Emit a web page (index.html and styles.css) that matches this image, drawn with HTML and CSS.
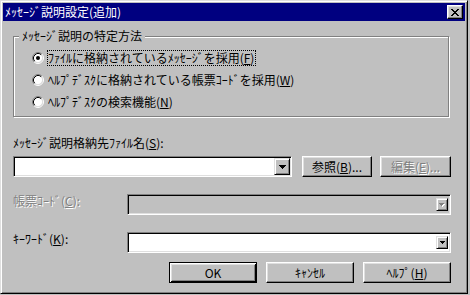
FILE: index.html
```html
<!DOCTYPE html>
<html lang="ja">
<head>
<meta charset="utf-8">
<title>ﾒｯｾｰｼﾞ説明設定(追加)</title>
<link rel="stylesheet" href="styles.css">
</head>
<body>
<div class="window">
  <div class="titlebar">
    <span class="title">ﾒｯｾｰｼﾞ説明設定(追加)</span>
    <span class="close">
      <svg class="close-x" width="8" height="7" viewBox="0 0 8 7"><path d="M0 0h2v1h-2zM6 0h2v1h-2zM1 1h2v1h-2zM5 1h2v1h-2zM2 2h4v1h-4zM3 3h2v1h-2zM2 4h4v1h-4zM1 5h2v1h-2zM5 5h2v1h-2zM0 6h2v1h-2zM6 6h2v1h-2z" fill="#000"/></svg>
    </span>
  </div>
  <div class="content">
    <div class="group">
      <div class="legend">ﾒｯｾｰｼﾞ説明の特定方法</div>
      <div class="radios">
        <div class="radio-row">
          <svg class="radio" width="12" height="12" viewBox="0 0 12 12"><circle cx="6" cy="6" r="4.5" fill="#fff"/><path d="M2.11 9.89A5.5 5.5 0 0 1 9.89 2.11" fill="none" stroke="#808080"/><path d="M9.89 2.11A5.5 5.5 0 0 1 2.11 9.89" fill="none" stroke="#fff"/><path d="M2.82 9.18A4.5 4.5 0 0 1 9.18 2.82" fill="none" stroke="#000"/><path d="M9.18 2.82A4.5 4.5 0 0 1 2.82 9.18" fill="none" stroke="#dfdfdf"/><circle cx="6" cy="6" r="2" fill="#000"/></svg>
          <span class="rlabel focus">ﾌｧｲﾙに格納されているﾒｯｾｰｼﾞを採用(<u>F</u>)</span>
        </div>
        <div class="radio-row">
          <svg class="radio" width="12" height="12" viewBox="0 0 12 12"><circle cx="6" cy="6" r="4.5" fill="#fff"/><path d="M2.11 9.89A5.5 5.5 0 0 1 9.89 2.11" fill="none" stroke="#808080"/><path d="M9.89 2.11A5.5 5.5 0 0 1 2.11 9.89" fill="none" stroke="#fff"/><path d="M2.82 9.18A4.5 4.5 0 0 1 9.18 2.82" fill="none" stroke="#000"/><path d="M9.18 2.82A4.5 4.5 0 0 1 2.82 9.18" fill="none" stroke="#dfdfdf"/></svg>
          <span class="rlabel">ﾍﾙﾌﾟﾃﾞｽｸに格納されている帳票ｺｰﾄﾞを採用(<u>W</u>)</span>
        </div>
        <div class="radio-row">
          <svg class="radio" width="12" height="12" viewBox="0 0 12 12"><circle cx="6" cy="6" r="4.5" fill="#fff"/><path d="M2.11 9.89A5.5 5.5 0 0 1 9.89 2.11" fill="none" stroke="#808080"/><path d="M9.89 2.11A5.5 5.5 0 0 1 2.11 9.89" fill="none" stroke="#fff"/><path d="M2.82 9.18A4.5 4.5 0 0 1 9.18 2.82" fill="none" stroke="#000"/><path d="M9.18 2.82A4.5 4.5 0 0 1 2.82 9.18" fill="none" stroke="#dfdfdf"/></svg>
          <span class="rlabel">ﾍﾙﾌﾟﾃﾞｽｸの検索機能(<u>N</u>)</span>
        </div>
      </div>
    </div>

    <div class="field-label">ﾒｯｾｰｼﾞ説明格納先ﾌｧｲﾙ名(<u>S</u>):</div>
    <div class="file-row">
      <div class="combo combo-file">
        <span class="ddbtn">
          <svg width="7" height="4" viewBox="0 0 7 4"><path d="M0 0h7v1h-1v1h-1v1h-1v1h-1v-1h-1v-1h-1v-1h-1z" fill="#000"/></svg>
        </span>
      </div>
      <button class="btn btn-browse">参照(<u>B</u>)...</button>
      <button class="btn btn-edit is-disabled">編集(<u>E</u>)...</button>
    </div>

    <div class="form-row">
      <div class="row-label is-disabled">帳票ｺｰﾄﾞ(<u>C</u>):</div>
      <div class="combo combo-wide combo-disabled">
        <span class="ddbtn ddbtn-small">
          <svg width="6" height="4" viewBox="0 0 6 4"><path d="M1 1h5v1h-1v1h-1v1h-1v-1h-1v-1h-1z" fill="#fff"/><path d="M0 0h5v1h-1v1h-1v1h-1v-1h-1v-1h-1z" fill="#808080"/></svg>
        </span>
      </div>
    </div>

    <div class="form-row">
      <div class="row-label">ｷｰﾜｰﾄﾞ(<u>K</u>):</div>
      <div class="combo combo-wide">
        <span class="ddbtn ddbtn-small">
          <svg width="5" height="3" viewBox="0 0 5 3"><path d="M0 0h5v1h-1v1h-1v1h-1v-1h-1v-1h-1z" fill="#000"/></svg>
        </span>
      </div>
    </div>

    <div class="actions">
      <button class="btn btn-action btn-default">OK</button>
      <button class="btn btn-action">ｷｬﾝｾﾙ</button>
      <button class="btn btn-action">ﾍﾙﾌﾟ(<u>H</u>)</button>
    </div>
  </div>
</div>
</body>
</html>
```

FILE: styles.css
```css
* {
  box-sizing: border-box;
}

html,
body {
  margin: 0;
  padding: 0;
}

body {
  width: 470px;
  height: 295px;
  overflow: hidden;
  background: #c0c0c0;
  color: #000;
  font-family: "Noto Sans CJK JP", "Noto Sans", sans-serif;
  font-size: 12px;
  line-height: 14px;
}

.window {
  width: 468px;
  height: 294px;
  padding: 2px;
  background: #c0c0c0;
  border: 1px solid;
  border-color: #dfdfdf #000 #000 #dfdfdf;
  box-shadow: inset 1px 1px #fff, inset -1px -1px #808080;
}

.titlebar {
  height: 18px;
  padding: 0 2px;
  background: #000080;
  display: flex;
  align-items: center;
  justify-content: space-between;
}

.title {
  color: #fff;
  line-height: 18px;
  white-space: nowrap;
}

.close {
  width: 16px;
  height: 14px;
  background: #c0c0c0;
  border: 1px solid;
  border-color: #fff #000 #000 #fff;
  box-shadow: inset -1px -1px #808080, inset 1px 1px #dfdfdf;
  display: flex;
  align-items: center;
  justify-content: center;
}

.close-x {
  display: block;
}

.content {
  padding: 15px 14px 0 10px;
}

.group {
  width: 436px;
  height: 81px;
  border: 1px solid #808080;
  box-shadow: inset 1px 1px #fff, 1px 1px #fff;
}

.legend {
  width: fit-content;
  margin: -8px 0 0 5px;
  padding: 0 3px;
  background: #c0c0c0;
  white-space: nowrap;
}

.radios {
  margin-top: 4px;
  padding-left: 18px;
}

.radio-row {
  height: 22px;
  display: flex;
  align-items: center;
}

.radio {
  flex: none;
  display: block;
  margin-right: 3px;
}

.rlabel {
  border: 1px solid transparent;
  padding: 0 1px 0 0;
  white-space: nowrap;
}

.rlabel.focus {
  border: 1px dotted #000;
}

.field-label {
  margin-top: 19px;
  white-space: nowrap;
}

.file-row {
  margin-top: 6px;
  height: 21px;
  display: flex;
}

.combo {
  height: 21px;
  padding: 1px;
  background: #fff;
  border: 1px solid;
  border-color: #808080 #fff #fff #808080;
  box-shadow: inset 1px 1px #000, inset -1px -1px #dfdfdf;
  display: flex;
  align-items: center;
  justify-content: flex-end;
}

.combo-file {
  width: 279px;
  align-items: stretch;
}

.combo-wide {
  flex: 1;
}

.combo-disabled {
  background: #c0c0c0;
}

.ddbtn {
  width: 16px;
  background: #c0c0c0;
  border: 1px solid;
  border-color: #dfdfdf #000 #000 #dfdfdf;
  box-shadow: inset 1px 1px #fff, inset -1px -1px #808080;
  display: flex;
  align-items: center;
  justify-content: center;
}

.ddbtn svg {
  display: block;
}

.ddbtn-small {
  width: 12px;
  height: 13px;
  margin-right: 1px;
}

.btn {
  height: 21px;
  margin: 0;
  padding: 0;
  font: inherit;
  line-height: 14px;
  color: #000;
  background: #c0c0c0;
  border: 1px solid;
  border-color: #fff #000 #000 #fff;
  box-shadow: inset -1px -1px #808080, inset 1px 1px #dfdfdf;
  white-space: nowrap;
}

.btn-browse {
  width: 70px;
  margin-left: 10px;
}

.btn-edit {
  width: 71px;
  margin-left: 8px;
}

.is-disabled {
  color: #808080;
  text-shadow: 1px 1px 0 #fff;
}

.form-row {
  margin-top: 17px;
  height: 21px;
  display: flex;
}

.row-label {
  width: 114px;
  flex: none;
  white-space: nowrap;
}

.actions {
  margin-top: 9px;
  display: flex;
  justify-content: flex-end;
  gap: 9px;
}

.btn-action {
  width: 88px;
}

.btn-default {
  border: 1px solid #000;
  box-shadow: inset 1px 1px #fff, inset -1px -1px #000, inset 2px 2px #dfdfdf, inset -2px -2px #808080;
}
```
